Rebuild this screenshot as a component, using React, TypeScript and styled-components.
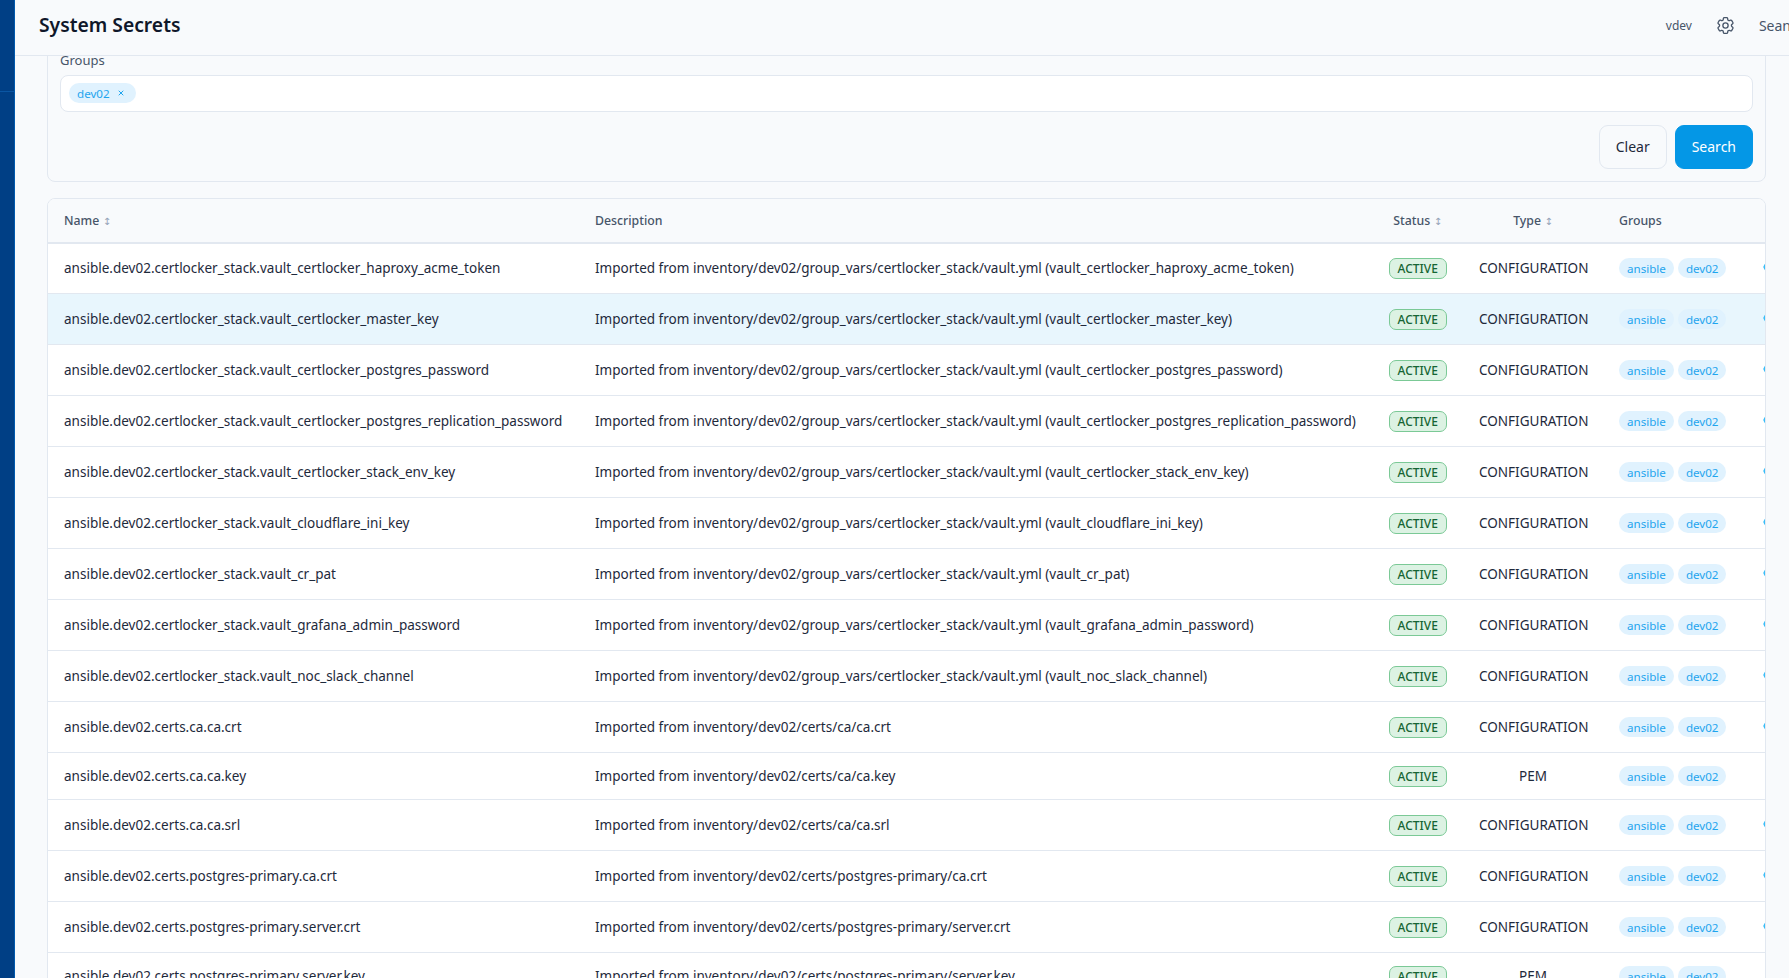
import React from "react";
import styled, { createGlobalStyle } from "styled-components";
import { HiOutlineCog6Tooth } from "react-icons/hi2";
import { Eye, X } from "lucide-react";

const FONT = `"Noto Sans", "Open Sans", sans-serif`;

const GlobalStyle = createGlobalStyle`
  html, body { margin: 0; padding: 0; height: 100%; overflow: hidden; }
  body { font-family: ${FONT}; color: #1e293b; background: #f8fafc; }
  * { box-sizing: border-box; }
`;

const Page = styled.div`
  display: flex;
  width: 1789px;
  height: 978px;
  overflow: hidden;
  background: #f8fafc;
`;
const Sidebar = styled.aside`
  flex: 0 0 15px;
  background: #003f85;
  border-right: 1px solid #0059ad;
  padding-top: 91px;
`;
const SidebarDivider = styled.div`
  height: 1px;
  background: #0a56a3;
`;
const Main = styled.div`
  flex: 1;
  min-width: 0;
  display: flex;
  flex-direction: column;
  overflow: hidden;
`;
const Header = styled.header`
  flex: 0 0 56px;
  display: flex;
  align-items: center;
  padding: 0 0 5px 24px;
  background: #f8fafc;
  border-bottom: 1px solid #e2e8f0;
  position: relative;
  z-index: 2;
`;
const Title = styled.h1`
  margin: 0;
  font-size: 19.3px;
  line-height: 28px;
  font-weight: 600;
  color: #0f172a;
`;
const HeaderRight = styled.div`
  margin-left: auto;
  margin-right: -2px;
  display: flex;
  align-items: center;
  flex-shrink: 0;
`;
const Env = styled.span`
  font-size: 12px;
  color: #475569;
  margin-right: 23px;
`;
const Gear = styled(HiOutlineCog6Tooth)`
  font-size: 21px;
  color: #475569;
  margin-right: 23px;
`;
const UserName = styled.span`
  font-size: 14px;
  color: #475569;
`;
const Content = styled.main`
  flex: 1;
  min-height: 0;
  overflow: hidden;
  padding: 0 23px 0 32px;
`;
const FilterCard = styled.section`
  margin-top: -27.5px;
  padding: 20px 12px 12px;
  background: #f8fafc;
  border: 1px solid #e2e8f0;
  border-radius: 8px;
`;
const FieldLabel = styled.label`
  display: block;
  font-size: 13px;
  line-height: 20px;
  color: #475569;
  margin-bottom: 5px;
`;
const TagInput = styled.div`
  height: 37.5px;
  display: flex;
  align-items: center;
  padding: 0 8px;
  background: #fff;
  border: 1px solid #e2e8f0;
  border-radius: 8px;
`;
const Chip = styled.span`
  display: inline-flex;
  align-items: center;
  height: 20px;
  padding: 0 8px;
  border-radius: 10px;
  background: #e0f2fe;
  color: #1fa5ee;
  font-size: 11.6px;
  white-space: nowrap;
`;
const ChipX = styled(X)`
  margin-left: 7px;
  margin-right: 3px;
  width: 8px;
  height: 8px;
  stroke-width: 3;
`;
const Actions = styled.div`
  display: flex;
  justify-content: flex-end;
  gap: 8px;
  margin-top: 12.5px;
`;
const Button = styled.button<{ $primary?: boolean }>`
  height: 44px;
  padding: 0 16px;
  border-radius: 9px;
  border: 1px solid ${(p) => (p.$primary ? "#0497e6" : "#e2e8f0")};
  background: ${(p) => (p.$primary ? "#0497e6" : "#f8fafc")};
  color: ${(p) => (p.$primary ? "#ffffff" : "#1e293b")};
  font-family: ${FONT};
  font-size: 14px;
  font-weight: 400;
`;
const TableCard = styled.section`
  margin-top: 16px;
  background: #fff;
  border: 1px solid #e2e8f0;
  border-radius: 8px 8px 0 0;
  overflow: hidden;
`;
const Table = styled.table`
  table-layout: fixed;
  width: 1730px;
  border-collapse: collapse;
`;
const Col = styled.col<{ $w: number }>`
  width: ${(p) => p.$w}px;
`;
const HeadRow = styled.tr`
  height: 44px;
  background: #f8fafc;
  border-bottom: 2px solid #e2e8f0;
`;
const Th = styled.th<{ $center?: boolean }>`
  padding: 0 16px;
  font-size: 12.3px;
  font-weight: 500;
  color: #475569;
  text-align: ${(p) => (p.$center ? "center" : "left")};
  white-space: nowrap;
`;
const Sort = styled.span`
  margin-left: 3.5px;
  font-size: 10px;
  font-weight: 400;
  color: #94a3b8;
  font-family: "DejaVu Sans", sans-serif;
`;
const Row = styled.tr<{ $selected?: boolean; $short?: boolean }>`
  height: ${(p) => (p.$short ? 47 : 51)}px;
  background: ${(p) => (p.$selected ? "#e8f6fd" : "#fff")};
  border-bottom: 1px solid #e2e8f0;
`;
const Td = styled.td<{ $center?: boolean }>`
  padding: 0 16px;
  font-size: 13.52px;
  color: #1e293b;
  white-space: nowrap;
  text-align: ${(p) => (p.$center ? "center" : "left")};
`;
const StatusBadge = styled.span`
  display: inline-block;
  width: 58px;
  height: 21px;
  line-height: 19px;
  text-align: center;
  border-radius: 7px;
  background: #dcf2e3;
  border: 1px solid #7bc996;
  color: #166534;
  font-size: 12px;
  font-weight: 500;
`;
const Tags = styled.div`
  display: flex;
  gap: 4px;
`;
const ActionIcon = styled(Eye)`
  display: block;
  margin: -2px 0 0 -0.5px;
  width: 16px;
  height: 16px;
  color: #38bdf8;
  stroke-width: 3;
`;

type Item = [string, string, string?];
const base = "ansible.dev02.";
const gv = "inventory/dev02/group_vars/certlocker_stack/vault.yml";
const items: Item[] = [
  ...[
    "vault_certlocker_haproxy_acme_token",
    "vault_certlocker_master_key",
    "vault_certlocker_postgres_password",
    "vault_certlocker_postgres_replication_password",
    "vault_certlocker_stack_env_key",
    "vault_cloudflare_ini_key",
    "vault_cr_pat",
    "vault_grafana_admin_password",
    "vault_noc_slack_channel",
  ].map((v): Item => [`${base}certlocker_stack.${v}`, `Imported from ${gv} (${v})`]),
  [`${base}certs.ca.ca.crt`, "Imported from inventory/dev02/certs/ca/ca.crt"],
  [`${base}certs.ca.ca.key`, "Imported from inventory/dev02/certs/ca/ca.key", "PEM"],
  [`${base}certs.ca.ca.srl`, "Imported from inventory/dev02/certs/ca/ca.srl"],
  [`${base}certs.postgres-primary.ca.crt`, "Imported from inventory/dev02/certs/postgres-primary/ca.crt"],
  [`${base}certs.postgres-primary.server.crt`, "Imported from inventory/dev02/certs/postgres-primary/server.crt"],
  [`${base}certs.postgres-primary.server.key`, "Imported from inventory/dev02/certs/postgres-primary/server.key", "PEM"],
];

export default function App() {
  return (
    <>
      <GlobalStyle />
      <Page>
        <Sidebar>
          <SidebarDivider />
        </Sidebar>
        <Main>
          <Header>
            <Title>System Secrets</Title>
            <HeaderRight>
              <Env>vdev</Env>
              <Gear />
              <UserName>Sean</UserName>
            </HeaderRight>
          </Header>
          <Content>
            <FilterCard>
              <FieldLabel>Groups</FieldLabel>
              <TagInput>
                <Chip>
                  dev02
                  <ChipX />
                </Chip>
              </TagInput>
              <Actions>
                <Button>Clear</Button>
                <Button $primary>Search</Button>
              </Actions>
            </FilterCard>
            <TableCard>
              <Table>
                <colgroup>
                  <Col $w={531} />
                  <Col $w={793.5} />
                  <Col $w={90.5} />
                  <Col $w={140} />
                  <Col $w={144} />
                  <Col $w={31} />
                </colgroup>
                <thead>
                  <HeadRow>
                    <Th>
                      Name<Sort>↕</Sort>
                    </Th>
                    <Th>Description</Th>
                    <Th $center>
                      Status<Sort>↕</Sort>
                    </Th>
                    <Th $center>
                      Type<Sort>↕</Sort>
                    </Th>
                    <Th>Groups</Th>
                    <Th />
                  </HeadRow>
                </thead>
                <tbody>
                  {items.map(([name, desc, type], i) => (
                    <Row key={name} $selected={i === 1} $short={type === "PEM"}>
                      <Td>{name}</Td>
                      <Td>{desc}</Td>
                      <Td $center>
                        <StatusBadge>ACTIVE</StatusBadge>
                      </Td>
                      <Td $center>{type ?? "CONFIGURATION"}</Td>
                      <Td>
                        <Tags>
                          <Chip>ansible</Chip>
                          <Chip>dev02</Chip>
                        </Tags>
                      </Td>
                      <Td>{type ? null : <ActionIcon />}</Td>
                    </Row>
                  ))}
                </tbody>
              </Table>
            </TableCard>
          </Content>
        </Main>
      </Page>
    </>
  );
}
